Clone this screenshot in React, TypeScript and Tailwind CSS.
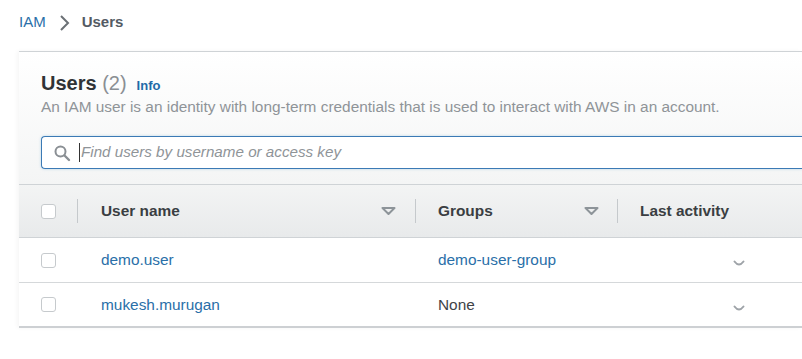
import React from "react";

// breadcrumb + users table, AWS console style
const SortDown = () => (
  <svg width="15" height="8" viewBox="0 0 15 8">
    <path d="M1.5 1 L13.5 1 L7.5 7 Z" fill="none" stroke="#8d9499" strokeWidth="2" strokeLinejoin="round" />
  </svg>
);

const Checkbox = () => (
  <div className="w-[15px] h-[15px] rounded-[3px] border border-[#c6cacd] bg-white" />
);

const Loading = () => (
  <svg width="12" height="8" viewBox="0 0 12 8">
    <path d="M1.5 2.5 Q6 8.5 10.5 2.5" fill="none" stroke="#9ea3a8" strokeWidth="2" strokeLinecap="round" />
  </svg>
);

const users = [
  { name: "demo.user", group: "demo-user-group" },
  { name: "mukesh.murugan", group: null },
];

export default function App() {
  return (
    <div className="w-[802px] h-[359px] bg-white overflow-hidden font-['Liberation_Sans',Arial,sans-serif] text-[15.4px]">
      {/* BREADCRUMB */}
      <div className="h-[51px] flex items-center pl-[19px] pb-[6px] gap-[10px]">
        <span className="text-[#2a6fa8] text-[15px]">IAM</span>
        <svg width="12" height="18" viewBox="0 0 12 18" className="mx-[2px]">
          <path d="M3 2 L10 9 L3 16" fill="none" stroke="#6b7075" strokeWidth="2" />
        </svg>
        <span className="text-[#545b64] text-[15px] font-bold">Users</span>
      </div>

      {/* PANEL */}
      <div className="ml-[19px] border-t border-[#cfd3d6] shadow-[-2px_0_4px_rgba(0,0,0,0.04)]">
        <div className="bg-gradient-to-b from-white to-[#f4f5f5] pl-[22px] pt-[21px] h-[132px]">
          <div className="flex items-baseline gap-[10px] h-[24px]">
            <h1 className="text-[20px] font-bold text-[#303336] leading-none">
              Users <span className="font-normal text-[#8a8f94]">(2)</span>
            </h1>
            <span className="text-[13px] font-bold text-[#1f6aa8]">Info</span>
          </div>
          <p className="text-[15.4px] text-[#8f9498] mt-[1px] leading-[18px] whitespace-nowrap">
            An IAM user is an identity with long-term credentials that is used to interact with AWS in an account.
          </p>
          <div className="mt-[20px] h-[33px] border border-[#3b7ab5] rounded-l-[4px] border-r-0 bg-white flex items-center pl-[11px] shadow-[0_0_3px_rgba(0,115,187,0.25)]">
            <svg width="18" height="18" viewBox="0 0 18 18">
              <circle cx="7.5" cy="7.5" r="5" fill="none" stroke="#8a8f94" strokeWidth="2" />
              <path d="M11.5 11.5 L16 16" stroke="#8a8f94" strokeWidth="2.4" strokeLinecap="round" />
            </svg>
            <span className="ml-[8px] w-px h-[19px] bg-[#333]" />
            <span className="ml-[1px] italic text-[#8f9498] text-[15.2px]">Find users by username or access key</span>
          </div>
        </div>

        {/* TABLE */}
        <div className="h-[54px] flex items-center border-t border-b border-[#cfd3d6] bg-gradient-to-b from-[#f3f4f4] to-[#e8eaeb] text-[#3a3e42] font-bold">
          <div className="w-[59px] h-[24px] flex items-center pl-[22px] border-r border-[#c5c9cc]">
            <Checkbox />
          </div>
          <div className="w-[338px] h-[24px] flex items-center justify-between pl-[23px] pr-[19px] border-r border-[#c5c9cc]">
            <span>User name</span>
            <SortDown />
          </div>
          <div className="w-[202px] h-[24px] flex items-center justify-between pl-[22px] pr-[18px] border-r border-[#c5c9cc]">
            <span>Groups</span>
            <SortDown />
          </div>
          <div className="pl-[22px]">Last activity</div>
        </div>

        {users.map((u, i) => (
          <div
            key={u.name}
            className={`h-[45px] flex items-center ${i === users.length - 1 ? "border-b-2 border-[#cdd0d3]" : "border-b border-[#d5d8da]"}`}
          >
            <div className="w-[59px] pl-[22px] flex items-center">
              <Checkbox />
            </div>
            <div className="w-[338px] pl-[23px] text-[#2a6fa8]">{u.name}</div>
            <div className="w-[202px] pl-[22px]">
              {u.group ? <span className="text-[#2a6fa8]">{u.group}</span> : <span className="text-[#3f4347]">None</span>}
            </div>
            <div className="pl-[115px] pt-[6px] flex items-center">
              <Loading />
            </div>
          </div>
        ))}
      </div>
    </div>
  );
}
